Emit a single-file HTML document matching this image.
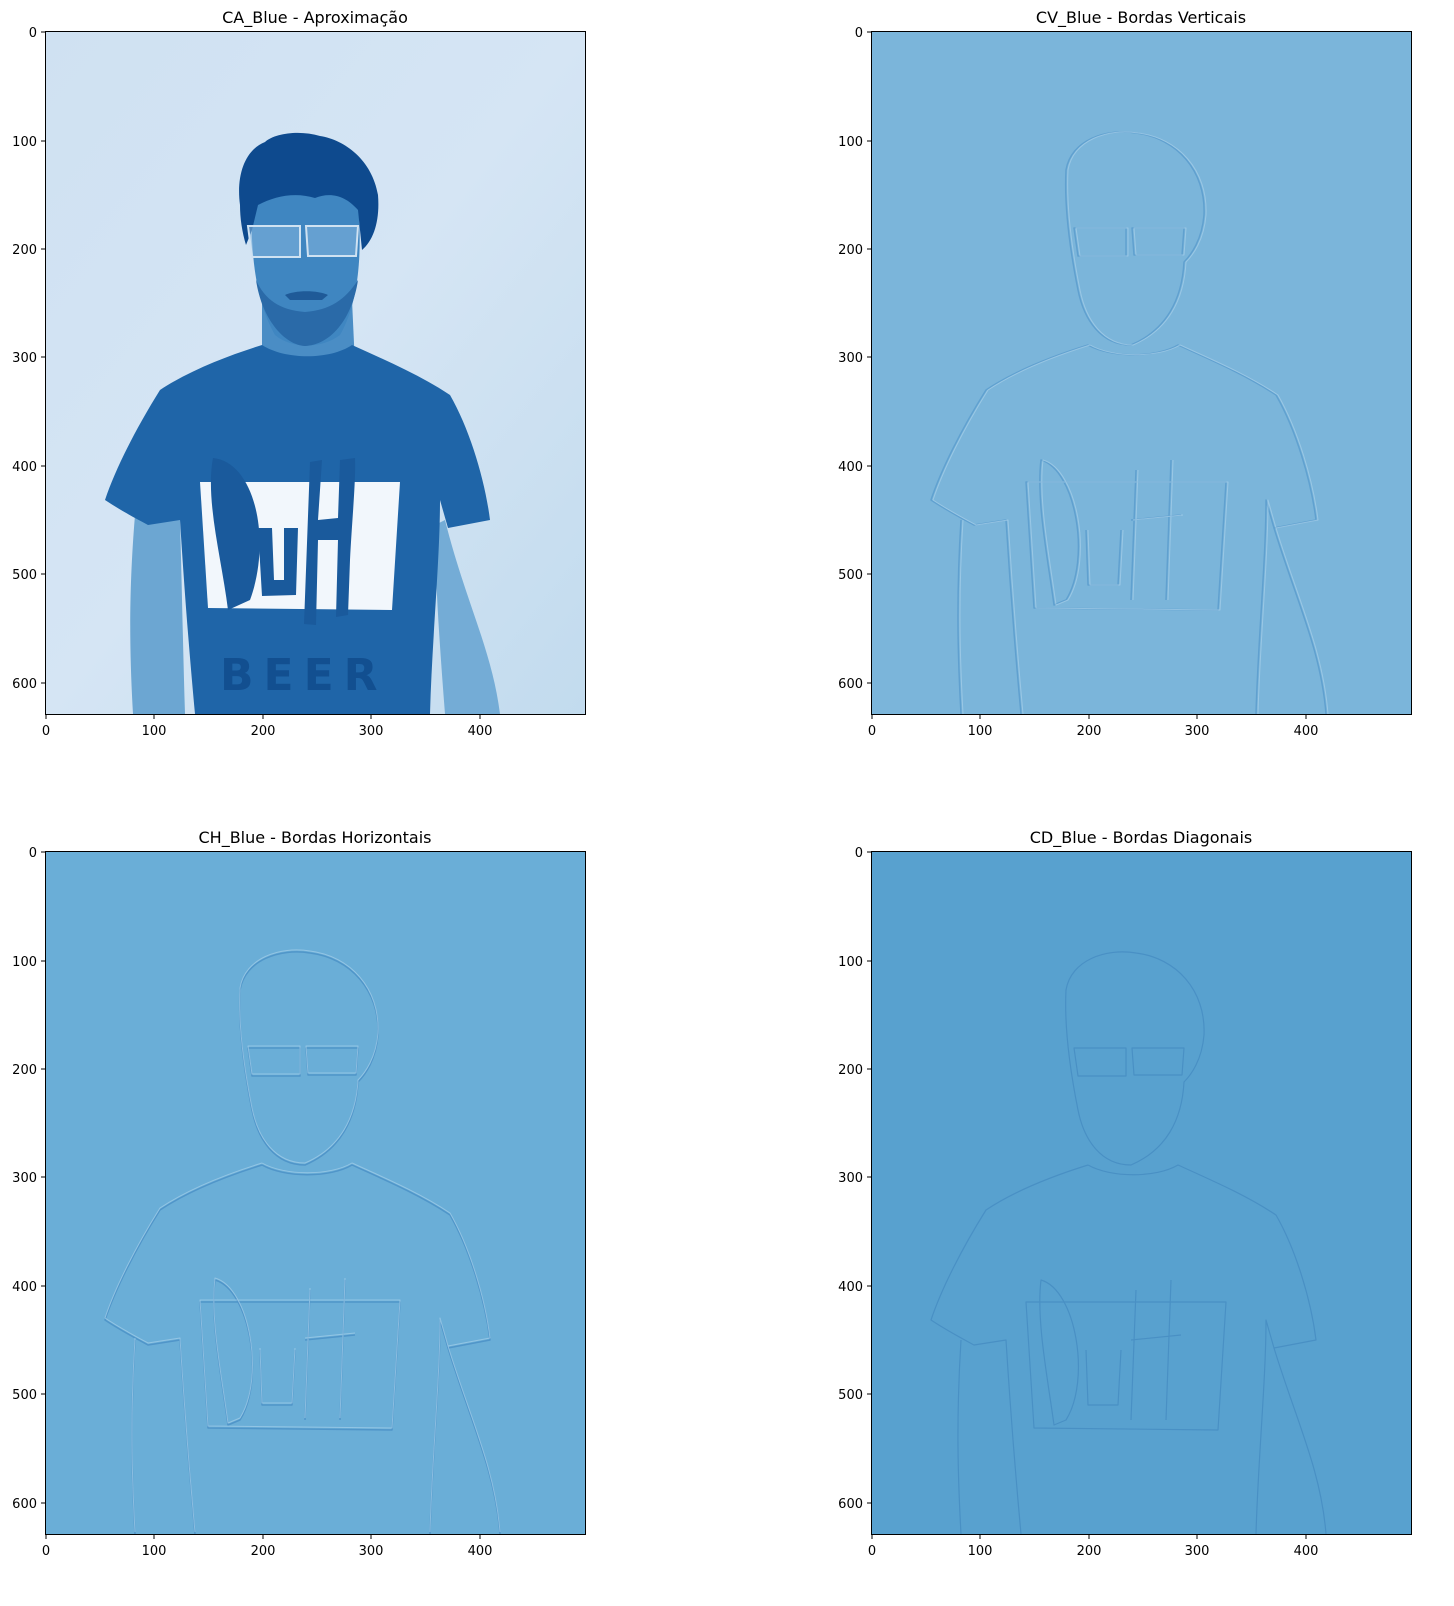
<!DOCTYPE html>
<html><head><meta charset="utf-8"><style>
html,body{margin:0;padding:0;background:#fff;overflow:hidden;width:1454px;height:1606px;}
svg{display:block;}
svg text{font-family:"DejaVu Sans","Liberation Sans",sans-serif;fill:#000;}
</style></head><body>
<svg width="1454" height="1606" viewBox="0 0 1454 1606" xmlns="http://www.w3.org/2000/svg">
<defs>
<g id="outline" fill="none" stroke-linejoin="round">
  <path d="M240 170 C245 140 280 128 310 133 C350 138 380 170 378 215 C376 240 365 255 358 262 C356 300 340 330 305 345 C275 345 258 320 252 290 C245 255 238 210 240 170Z"/>
  <path d="M248 228 L300 228 L300 256 L252 256 Z M306 228 L358 228 L356 255 L308 255 Z"/>
  <path d="M262 345 C285 358 330 358 352 345 C385 360 420 375 450 395 C470 430 485 480 490 520 L448 528 L440 500 C440 560 432 640 430 714 M262 345 C230 355 190 370 160 390 C135 430 115 470 105 500 C120 510 135 518 148 525 L180 520 C185 600 190 660 195 714"/>
  <path d="M135 520 C130 600 132 660 135 714 M448 528 C470 600 495 650 500 714"/>
  <path d="M200 482 L400 482 L392 610 L208 608 Z"/>
  <path d="M215 460 C250 470 265 560 240 600 L228 605 C222 560 210 500 215 460Z M260 530 L262 585 L292 585 L295 530 M310 470 L305 600 M345 460 L340 600 M305 520 L355 515"/>
</g>
</defs>

<text x="315" y="23" font-size="16" text-anchor="middle">CA_Blue - Aproximação</text>
<svg x="46" y="32" width="539" height="682" viewBox="46 32 539 682" overflow="hidden">
  <defs><linearGradient id="bg1" x1="0" y1="0" x2="1" y2="1"><stop offset="0" stop-color="#cfe1f2"/><stop offset="0.5" stop-color="#d5e5f4"/><stop offset="1" stop-color="#c2dbee"/></linearGradient></defs>
  <rect x="46" y="32" width="539" height="682" fill="url(#bg1)"/>
  <path d="M135 515 C128 600 130 660 133 714 L185 714 C183 650 182 590 180 520Z" fill="#6ca6d2"/>
  <path d="M445 520 C465 600 492 650 500 714 L445 714 C440 650 435 580 435 525Z" fill="#74acd6"/>
  <path d="M262 300 L352 300 L355 365 L262 365Z" fill="#4a8dc5"/>
  <path d="M262 345 C285 360 330 360 352 345 C385 360 420 375 450 395 C470 430 485 480 490 520 L448 528 L440 500 C440 560 432 640 430 714 L195 714 C190 660 185 600 180 520 L148 525 C135 518 120 510 105 500 C115 470 135 430 160 390 C190 370 230 355 262 345Z" fill="#1f65a8"/>
  <path d="M252 200 C250 250 255 300 275 335 C290 348 320 350 340 335 C360 300 362 250 358 200 C330 185 280 185 252 200Z" fill="#3f86c1"/>
  <path d="M256 280 C262 320 285 345 305 346 C330 345 352 320 358 280 C345 300 330 310 305 312 C280 310 265 300 256 280Z" fill="#2a6aa8"/>
  <path d="M285 295 C295 290 318 290 328 295 L322 300 L290 300Z" fill="#1f5a98"/>
  <path d="M240 205 C236 175 245 150 265 142 C275 133 300 130 320 136 C345 140 372 160 378 195 C380 220 374 240 362 250 L358 210 C345 195 330 192 315 198 C295 192 275 196 258 205 L252 230 L246 245 C242 232 240 218 240 205Z" fill="#0e4a8e"/>
  <path d="M248 226 L300 226 L300 257 L252 257 Z M306 226 L358 226 L356 256 L308 256 Z" fill="#7fb3dc" fill-opacity="0.6" stroke="#cfe2f2" stroke-width="2"/>
  <path d="M200 482 L400 482 L392 610 L208 608 Z" fill="#f2f7fc"/>
  <g fill="#1a5a9c">
    <path d="M213 458 C255 462 272 540 250 600 L228 610 C222 560 205 500 213 458Z"/>
    <path d="M258 528 L272 528 L274 580 L284 580 L284 528 L298 528 L296 595 L262 596Z"/>
    <path d="M310 462 L322 460 L318 520 L338 518 L340 460 L355 458 C356 480 352 520 350 560 L348 615 L336 617 L338 540 L318 540 L316 625 L304 624 Z"/>
  </g>
  <text x="220" y="690" font-size="44" font-weight="bold" font-family="Liberation Sans, sans-serif" style="fill:#124f90" letter-spacing="10">BEER</text>
</svg>
<rect x="45.5" y="31.5" width="540" height="683" fill="none" stroke="#000" stroke-width="1"/>

<text x="1141" y="23" font-size="16" text-anchor="middle">CV_Blue - Bordas Verticais</text>
<rect x="872" y="32" width="539" height="682" fill="#7bb5da"/>
<use href="#outline" transform="translate(826,0)" stroke="#5a9ccd" stroke-width="1.5" opacity="0.8"/>
<use href="#outline" transform="translate(828,0)" stroke="#a8d0ea" stroke-width="1" opacity="0.7"/>
<rect x="871.5" y="31.5" width="540" height="683" fill="none" stroke="#000" stroke-width="1"/>

<text x="315" y="843" font-size="16" text-anchor="middle">CH_Blue - Bordas Horizontais</text>
<rect x="46" y="852" width="539" height="682" fill="#6aaed7"/>
<use href="#outline" transform="translate(0,820)" stroke="#4a90c6" stroke-width="1.5" opacity="0.8"/>
<use href="#outline" transform="translate(0,818)" stroke="#a5cfea" stroke-width="1" opacity="0.7"/>
<rect x="45.5" y="851.5" width="540" height="683" fill="none" stroke="#000" stroke-width="1"/>

<text x="1141" y="843" font-size="16" text-anchor="middle">CD_Blue - Bordas Diagonais</text>
<rect x="872" y="852" width="539" height="682" fill="#58a1cf"/>
<use href="#outline" transform="translate(826,820)" stroke="#4389c0" stroke-width="1.2" opacity="0.7"/>
<rect x="871.5" y="851.5" width="540" height="683" fill="none" stroke="#000" stroke-width="1"/>

<g stroke="#000" stroke-width="1">
  <path d="M41 32H45M41 141H45M41 249H45M41 357H45M41 466H45M41 574H45M41 683H45"/>
  <path d="M867 32H871M867 141H871M867 249H871M867 357H871M867 466H871M867 574H871M867 683H871"/>
  <path d="M41 852H45M41 961H45M41 1069H45M41 1177H45M41 1286H45M41 1394H45M41 1503H45"/>
  <path d="M867 852H871M867 961H871M867 1069H871M867 1177H871M867 1286H871M867 1394H871M867 1503H871"/>
  <path d="M46 715V719M154 715V719M263 715V719M371 715V719M480 715V719"/>
  <path d="M872 715V719M980 715V719M1089 715V719M1197 715V719M1306 715V719"/>
  <path d="M46 1535V1539M154 1535V1539M263 1535V1539M371 1535V1539M480 1535V1539"/>
  <path d="M872 1535V1539M980 1535V1539M1089 1535V1539M1197 1535V1539M1306 1535V1539"/>
</g>
<g font-size="13" text-anchor="end">
  <text x="37" y="37">0</text><text x="37" y="146">100</text><text x="37" y="254">200</text><text x="37" y="362">300</text><text x="37" y="471">400</text><text x="37" y="579">500</text><text x="37" y="688">600</text>
  <text x="863" y="37">0</text><text x="863" y="146">100</text><text x="863" y="254">200</text><text x="863" y="362">300</text><text x="863" y="471">400</text><text x="863" y="579">500</text><text x="863" y="688">600</text>
  <text x="37" y="857">0</text><text x="37" y="966">100</text><text x="37" y="1074">200</text><text x="37" y="1182">300</text><text x="37" y="1291">400</text><text x="37" y="1399">500</text><text x="37" y="1508">600</text>
  <text x="863" y="857">0</text><text x="863" y="966">100</text><text x="863" y="1074">200</text><text x="863" y="1182">300</text><text x="863" y="1291">400</text><text x="863" y="1399">500</text><text x="863" y="1508">600</text>
</g>
<g font-size="13" text-anchor="middle">
  <text x="46" y="735">0</text><text x="154" y="735">100</text><text x="263" y="735">200</text><text x="371" y="735">300</text><text x="480" y="735">400</text>
  <text x="872" y="735">0</text><text x="980" y="735">100</text><text x="1089" y="735">200</text><text x="1197" y="735">300</text><text x="1306" y="735">400</text>
  <text x="46" y="1555">0</text><text x="154" y="1555">100</text><text x="263" y="1555">200</text><text x="371" y="1555">300</text><text x="480" y="1555">400</text>
  <text x="872" y="1555">0</text><text x="980" y="1555">100</text><text x="1089" y="1555">200</text><text x="1197" y="1555">300</text><text x="1306" y="1555">400</text>
</g>
</svg>
</body></html>
